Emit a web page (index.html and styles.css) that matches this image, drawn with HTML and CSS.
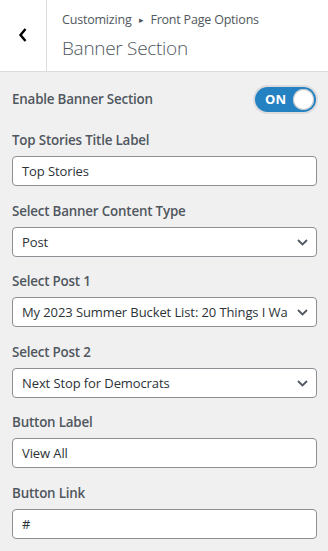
FILE: index.html
```html
<!DOCTYPE html>
<html>
<head>
<meta charset="utf-8">
<link rel="stylesheet" href="styles.css">
</head>
<body>
<div class="panel">
  <header class="head">
    <button class="back" aria-label="Back">
      <svg width="10" height="16" viewBox="0 0 10 16"><path d="M7.5 2 L2.5 8 L7.5 14" fill="none" stroke="#000" stroke-width="2.4"/></svg>
    </button>
    <div class="titles">
      <div class="crumb">Customizing <span class="sep">&#9656;</span> Front Page Options</div>
      <h1 class="title">Banner Section</h1>
    </div>
  </header>
  <main class="controls">
    <div class="toggle-row">
      <span class="label">Enable Banner Section</span>
      <span class="switch"><span class="on">ON</span><span class="knob"></span></span>
    </div>
    <div class="control">
      <label class="label">Top Stories Title Label</label>
      <div class="field">Top Stories</div>
    </div>
    <div class="control">
      <label class="label">Select Banner Content Type</label>
      <div class="field select"><span class="txt">Post</span><svg class="chev" width="11" height="7" viewBox="0 0 11 7"><path d="M1 1 L5.5 5.5 L10 1" fill="none" stroke="#50575e" stroke-width="1.8"/></svg></div>
    </div>
    <div class="control">
      <label class="label">Select Post 1</label>
      <div class="field select"><span class="txt">My 2023 Summer Bucket List: 20 Things I Wa</span><svg class="chev" width="11" height="7" viewBox="0 0 11 7"><path d="M1 1 L5.5 5.5 L10 1" fill="none" stroke="#50575e" stroke-width="1.8"/></svg></div>
    </div>
    <div class="control">
      <label class="label">Select Post 2</label>
      <div class="field select"><span class="txt">Next Stop for Democrats</span><svg class="chev" width="11" height="7" viewBox="0 0 11 7"><path d="M1 1 L5.5 5.5 L10 1" fill="none" stroke="#50575e" stroke-width="1.8"/></svg></div>
    </div>
    <div class="control">
      <label class="label">Button Label</label>
      <div class="field">View All</div>
    </div>
    <div class="control">
      <label class="label">Button Link</label>
      <div class="field">#</div>
    </div>
  </main>
</div>
</body>
</html>
```
FILE: styles.css
```css
* { box-sizing: border-box; }
html, body { margin: 0; padding: 0; }
body {
  background: #f0f0f1;
  font-family: "Open Sans", "Noto Sans", sans-serif;
  color: #50575e;
  width: 328px;
  height: 551px;
  overflow: hidden;
}
.head {
  display: flex;
  height: 72px;
  background: #fff;
  border-bottom: 1px solid #dcdcde;
}
.back {
  width: 47px;
  height: 71px;
  border: 0;
  border-right: 1px solid #dcdcde;
  background: #fff;
  padding: 0 0 2px 0;
  display: flex;
  align-items: center;
  justify-content: center;
}
.titles {
  padding: 10px 0 0 15px;
}
.crumb {
  font-size: 12.5px;
  line-height: 20px;
  color: #50575e;
  letter-spacing: -0.2px;
}
.sep { font-size: 9px; margin: 0 4px; position: relative; top: -1px; }
.title {
  margin: 5px 0 0;
  font-size: 19px;
  font-weight: 300;
  line-height: 24px;
  color: #50575e;
  letter-spacing: -0.3px;
}
.controls {
  padding: 14px 11px 0 12px;
  display: flex;
  flex-direction: column;
  gap: 14.6px;
}
.toggle-row {
  display: flex;
  justify-content: space-between;
  align-items: center;
  height: 26px;
  margin-bottom: 3.4px;
}
.label {
  display: block;
  font-size: 13.4px;
  font-weight: 600;
  line-height: 20px;
  color: #50575e;
  letter-spacing: -0.2px;
}
.control .label { margin-bottom: 6px; }
.switch {
  width: 61px;
  height: 25px;
  border-radius: 13px;
  background: #2582c2;
  box-shadow: 0 0 0 2px #dcdcde;
  display: flex;
  align-items: center;
  justify-content: space-between;
  padding: 0 2px 0 10px;
  margin-right: 1px;
}
.on {
  color: #fff;
  font-weight: 700;
  font-size: 13px;
  letter-spacing: 0.2px;
}
.knob {
  width: 21px;
  height: 21px;
  border-radius: 50%;
  background: #fff;
  box-shadow: inset 0 0 0 1px #c3c4c7;
}
.field {
  height: 30px;
  border: 1px solid #8c8f94;
  border-radius: 4px;
  background: #fff;
  padding: 0 8px 0 9px;
  font-size: 13px;
  line-height: 28px;
  color: #2c3338;
  letter-spacing: -0.1px;
  white-space: nowrap;
  overflow: hidden;
}
.select {
  display: flex;
  align-items: center;
}
.txt {
  overflow: hidden;
  white-space: nowrap;
  flex: 1;
  min-width: 0;
  margin-right: 8px;
}
.chev {
  flex: none;
  display: block;
  margin: 1px 0 0 0;
}
```
